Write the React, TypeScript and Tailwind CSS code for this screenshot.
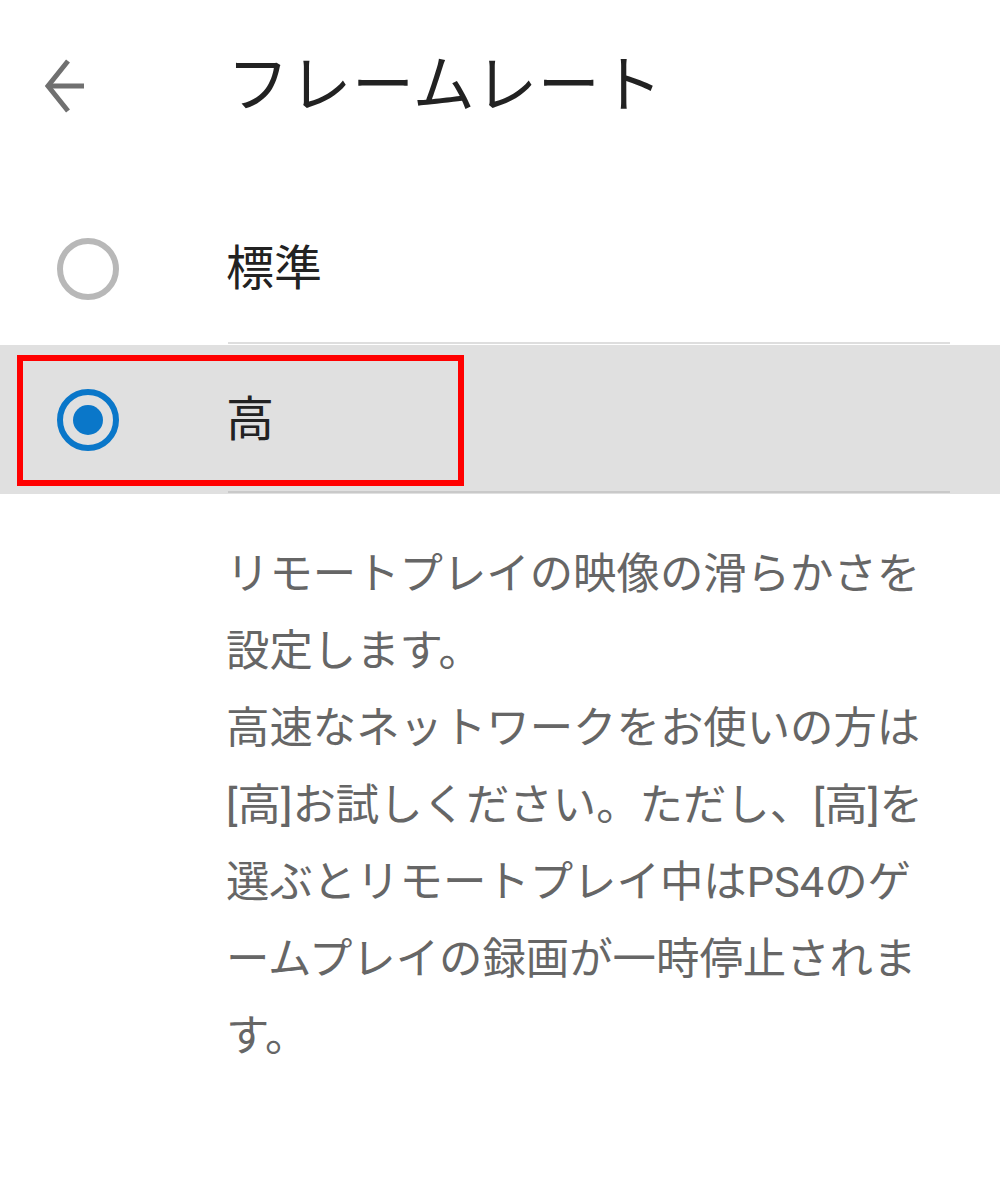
import { useState } from 'react'

const font = { fontFamily: 'Roboto, "Noto Sans CJK JP", sans-serif' }

function Radio({ checked }: { checked: boolean }) {
  return checked ? (
    <div className="flex h-[62px] w-[62px] items-center justify-center rounded-full border-[6px] border-[#0a77c9]">
      <div className="h-[30px] w-[30px] rounded-full bg-[#0a77c9]" />
    </div>
  ) : (
    <div className="h-[62px] w-[62px] rounded-full border-[6px] border-[#b8b8b8]" />
  )
}

export default function App() {
  const [rate, setRate] = useState('high')

  const lines = [
    'リモートプレイの映像の滑らかさを',
    '設定します。',
    '高速なネットワークをお使いの方は',
    '[高]お試しください。ただし、[高]を',
    '選ぶとリモートプレイ中はPS4のゲ',
    'ームプレイの録画が一時停止されま',
    'す。',
  ]

  return (
    <div className="min-h-screen w-[1000px] bg-white" style={font}>
      {/* Header */}
      <header className="flex h-[166px] items-center pt-[5px]">
        <button className="ml-[44px] flex h-[56px] w-[44px] items-center justify-center">
          <svg width="44" height="56" viewBox="0 0 44 56" fill="none" stroke="#707070" strokeWidth="5">
            <polyline points="24,3 4,28 24,53" />
            <line x1="4" y1="28" x2="40" y2="28" />
          </svg>
        </button>
        <h1 className="ml-[139px] text-[62px] leading-none tracking-[0.5px] text-[#222]">フレームレート</h1>
      </header>

      {/* Options */}
      <div className="mt-[30px]">
        <div className="flex h-[146px] cursor-pointer items-center" onClick={() => setRate('normal')}>
          <div className="ml-[57px]">
            <Radio checked={rate === 'normal'} />
          </div>
          <span className="ml-[107px] text-[48px] leading-none text-[#222]">標準</span>
        </div>
        <div className="ml-[228px] mr-[50px] h-[2px] bg-[#dedede]" />
        <div className="h-px" />

        <div className="relative cursor-pointer bg-[#e0e0e0]" onClick={() => setRate('high')}>
          <div className="flex h-[146px] items-center pt-1">
            <div className="ml-[57px]">
              <Radio checked={rate === 'high'} />
            </div>
            <span className="ml-[107px] text-[48px] leading-none text-[#222]">高</span>
          </div>
          <div className="ml-[228px] mr-[50px] h-[2px] bg-[#c9c9c9]" />
          <div className="h-px" />
          <div className="pointer-events-none absolute left-[17px] top-[10px] h-[131px] w-[447px] border-[6px] border-[#ff0000]" />
        </div>
      </div>

      {/* Description */}
      <div className="ml-[226px] pt-[42px] text-[43.4px] leading-[77px] text-[#666]">
        {lines.map((l) => (
          <div key={l} className="whitespace-nowrap">
            {l}
          </div>
        ))}
      </div>
    </div>
  )
}
